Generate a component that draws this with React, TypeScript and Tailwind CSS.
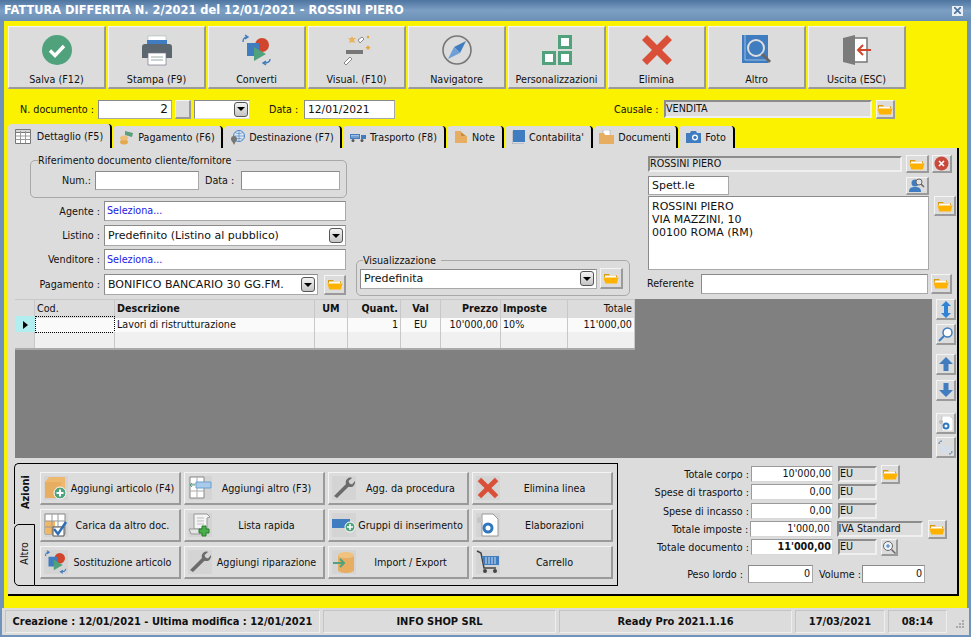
import type { ReactNode } from "react";

const bevel = "border border-t-[#f4f4f4] border-l-[#f4f4f4] border-r-[#9a9a9a] border-b-[#9a9a9a] border-r-2 border-b-2 bg-[#dcdcdc]";
const sunken = "border border-[#a8a8a8] border-t-[#8a8a8a] border-l-[#8a8a8a] bg-white";
const readonly = "border-2 border-t-[#8c8c8c] border-l-[#8c8c8c] border-r-[#efefef] border-b-[#efefef] bg-[#dcdcdc]";

function Folder({ size = 16 }: { size?: number }) {
  return (
    <svg width={size} height={size} viewBox="0 0 16 16">
      <path d="M1 4h5l1 1.500h7V7H1z" fill="#d99a10" />
      <path d="M2 5.500h11V8H2z" fill="#fff" />
      <path d="M0.500 7.500h15L13.800 13.500H2.200z" fill="#ffb300" />
    </svg>
  );
}

function FolderButton({ className }: { className: string }) {
  return (
    <button className={`${bevel} flex items-center justify-center shrink-0 ${className}`}>
      <Folder />
    </button>
  );
}

function ArrowBox() {
  return (
    <span className="w-[14px] h-[15px] shrink-0 rounded-[3px] border border-[#555] bg-gradient-to-b from-[#f4f4f4] to-[#c4c4c4] flex items-center justify-center">
      <span className="w-0 h-0 border-x-[4px] border-x-transparent border-t-[4px] border-t-black" />
    </span>
  );
}

function Select({ text, className }: { text: string; className: string }) {
  return (
    <div className={`${sunken} flex items-center pl-[3px] pr-[2px] shrink-0 ${className}`}>
      <span className="flex-1 font-stretch-normal text-[11px] whitespace-nowrap overflow-hidden">{text}</span>
      <ArrowBox />
    </div>
  );
}

function SalvaIcon() {
  return (
    <svg width="32" height="32" viewBox="0 0 32 32">
      <circle cx="16" cy="16" r="15" fill="#4fa27b" />
      <path d="M9 16.500l5 5 9-9.500" fill="none" stroke="#fff" strokeWidth="3.400" />
    </svg>
  );
}

function StampaIcon() {
  return (
    <svg width="32" height="32" viewBox="0 0 32 32">
      <path d="M7 2h18v8H7z" fill="#fff" stroke="#9aa" strokeWidth="0.500" />
      <path d="M6 6h20v7H6z" fill="#3f7dc0" />
      <path d="M1 13c0-2 1-3 3-3h24c2 0 3 1 3 3v11H1z" fill="#5b666e" />
      <path d="M7 19h18v12H7z" fill="#fff" stroke="#778" strokeWidth="0.700" />
      <path d="M10 23h12M10 26h12" stroke="#9aa" strokeWidth="1" />
    </svg>
  );
}

function ConvertiIcon({ size = 32 }: { size?: number }) {
  return (
    <svg width={size} height={size} viewBox="0 0 32 32">
      <circle cx="21" cy="11" r="7" fill="#d0452c" />
      <path d="M6 9h12v13H6z" fill="#3f7dc0" />
      <path d="M13 13l12 7-12 7z" fill="#4fa27b" />
      <path d="M2 8c0-3 1-5 5-5M4 1l3 2-3 2" fill="none" stroke="#3f7dc0" strokeWidth="1.400" />
      <path d="M29 25c0 3-2 4-6 4M25 27l-3 2 3 2" fill="none" stroke="#3f7dc0" strokeWidth="1.400" />
    </svg>
  );
}

function VisualIcon() {
  return (
    <svg width="32" height="32" viewBox="0 0 32 32">
      <path d="M5 16h17v4H5z" fill="#777" />
      <path d="M17 6l4-3 2 2-4 4z" fill="#fff" stroke="#888" />
      <path d="M3 29l6-6 2 2-6 6z" fill="#fff" stroke="#888" />
      <path d="M11 2l1 2 3 0-2 2 1 3-3-1-3 1 1-3-2-2 3 0z" fill="#e9b35c" />
      <path d="M27 11l.8 1.700 1.700.3-1.300 1.200.3 1.800-1.500-.9-1.500.9.300-1.800-1.300-1.200 1.700-.3z" fill="#e9a030" />
      <circle cx="27" cy="3" r="1.200" fill="#e9a030" />
    </svg>
  );
}

function NavIcon() {
  return (
    <svg width="32" height="32" viewBox="0 0 32 32">
      <circle cx="16" cy="16" r="14" fill="none" stroke="#777" strokeWidth="1.600" />
      <path d="M25 7l-6 12-6-6z" fill="#3f7dc0" />
      <path d="M7 25l6-12 6 6z" fill="#6f9fd8" />
    </svg>
  );
}

function PersonalIcon() {
  return (
    <svg width="32" height="32" viewBox="0 0 32 32">
      <path d="M18.500 2.500h11v11h-11zM2.500 18.500h11v11h-11zM18.500 18.500h11v11h-11z" fill="#fff" stroke="#4fa27b" strokeWidth="3" />
    </svg>
  );
}

function CrossIcon({ size = 32 }: { size?: number }) {
  return (
    <svg width={size} height={size} viewBox="0 0 32 32">
      <path d="M6 1l10 10L26 1l5 5-10 10 10 10-5 5-10-10L6 31l-5-5 10-10L1 6z" fill="#d94f38" />
    </svg>
  );
}

function AltroIcon() {
  return (
    <svg width="32" height="32" viewBox="0 0 32 32">
      <path d="M1 1h26v28H1z" fill="#3f7dc0" />
      <path d="M4 1v25h23" fill="none" stroke="#9cc0e6" strokeWidth="1" />
      <circle cx="15" cy="14" r="8" fill="#3f7dc0" stroke="#ddd" strokeWidth="2" />
      <path d="M21 20l8 8" stroke="#666" strokeWidth="3" />
    </svg>
  );
}

function UscitaIcon() {
  return (
    <svg width="32" height="32" viewBox="0 0 32 32">
      <path d="M12 4h14v24H12z" fill="#fff" stroke="#777" strokeWidth="1.500" />
      <path d="M2 4l12-3v30L2 28z" fill="#7b7b7b" />
      <path d="M30 16H17M22 11l-5 5 5 5" fill="none" stroke="#d0452c" strokeWidth="2" />
    </svg>
  );
}

function Wrench() {
  return (
    <svg width="24" height="24" viewBox="0 0 24 24">
      <rect width="24" height="24" fill="#d4d4d4" />
      <path d="M2 20L14 8c-1-3 1-6 4-6.500 1 0 1.500 0 2 .5l-3.500 3 1 2.500 2.500 1L23 5c.5 2-1 5.500-3.500 6-1.500.3-2 0-3-.3L5 22z" fill="#6b6b6b" />
    </svg>
  );
}

function GridIcon() {
  return (
    <svg width="18" height="15" viewBox="0 0 18 15">
      <path d="M.5 2.500h15v12H.5z" fill="#fff" stroke="#777" />
      <path d="M.5 .5h15v3H.5z" fill="#d8d8d8" stroke="#777" />
      <path d="M.5 7h15M.5 10.500h15M5.500 2v12M10.500 2v12" stroke="#999" />
    </svg>
  );
}

function TabIcon({ kind }: { kind: string }) {
  if (kind === "grid") return <GridIcon />;
  if (kind === "coin")
    return (
      <svg width="15" height="15" viewBox="0 0 15 15">
        <ellipse cx="5" cy="12" rx="4" ry="2.500" fill="#e3a94f" />
        <ellipse cx="5" cy="8" rx="4" ry="2.500" fill="#edc077" />
        <path d="M6 1l8 2-1 4-7-2z" fill="#5d9e7c" />
      </svg>
    );
  if (kind === "globe")
    return (
      <svg width="15" height="15" viewBox="0 0 15 15">
        <circle cx="9" cy="6" r="5.500" fill="#dfe8f2" stroke="#4f86c6" />
        <path d="M3.500 6h11M9 .5v11M5 2.500c3 1.500 5 1.500 8 0M5 9.500c3-1.500 5-1.500 8 0" stroke="#4f86c6" strokeWidth="0.700" fill="none" />
        <circle cx="4" cy="9" r="3" fill="#777" />
        <path d="M2 11l2 4 2-4z" fill="#777" />
      </svg>
    );
  if (kind === "truck")
    return (
      <svg width="16" height="12" viewBox="0 0 16 12">
        <path d="M0 3h10v5H0zM11 4h5v4h-5z" fill="#3f7dc0" />
        <path d="M1 4.500h8M1 6h8" stroke="#cfe0f2" strokeWidth="0.700" />
        <circle cx="3" cy="9.500" r="1.500" fill="#555" />
        <circle cx="12" cy="9.500" r="1.500" fill="#555" />
      </svg>
    );
  if (kind === "note")
    return (
      <svg width="14" height="14" viewBox="0 0 14 14">
        <path d="M1 1h6v5h6v7H1z" fill="#e7ae62" />
        <path d="M7 2l5 4H7z" fill="#c88a3c" />
      </svg>
    );
  if (kind === "book")
    return (
      <svg width="13" height="14" viewBox="0 0 13 14">
        <path d="M1 0h12v12H1z" fill="#3f7dc0" />
        <path d="M0 1v13h12" fill="none" stroke="#9ab" strokeWidth="1" />
      </svg>
    );
  if (kind === "docs")
    return (
      <svg width="15" height="14" viewBox="0 0 15 14">
        <path d="M4 0h7v6H4z" fill="#fff" stroke="#999" strokeWidth="0.500" />
        <path d="M0 3h5l1 2h9v9H0z" fill="#e7ae62" />
      </svg>
    );
  return (
    <svg width="15" height="12" viewBox="0 0 15 12">
      <path d="M0 2h4l1-2h5l1 2h4v10H0z" fill="#3f7dc0" />
      <circle cx="9" cy="6.500" r="3" fill="#fff" />
      <circle cx="9" cy="6.500" r="1.700" fill="#3f7dc0" />
    </svg>
  );
}

function Tab({ kind, label, className }: { kind: string; label: string; className: string }) {
  return (
    <div className={`shrink-0 flex items-center justify-center gap-[4px] bg-[#dcdcdc] border-r-2 border-r-black rounded-t-[4px] ${className}`}>
      <TabIcon kind={kind} />
      <span>{label}</span>
    </div>
  );
}

const tools: { label: string; icon: ReactNode }[] = [
  { label: "Salva (F12)", icon: <SalvaIcon /> },
  { label: "Stampa (F9)", icon: <StampaIcon /> },
  { label: "Converti", icon: <ConvertiIcon /> },
  { label: "Visual. (F10)", icon: <VisualIcon /> },
  { label: "Navigatore", icon: <NavIcon /> },
  { label: "Personalizzazioni", icon: <PersonalIcon /> },
  { label: "Elimina", icon: <CrossIcon /> },
  { label: "Altro", icon: <AltroIcon /> },
  { label: "Uscita (ESC)", icon: <UscitaIcon /> },
];

function ActBox({ children }: { children: ReactNode }) {
  return <span className="w-[24px] h-[24px] shrink-0 bg-[#d4d4d4] flex items-center justify-center">{children}</span>;
}

const actions: { label: string; icon: ReactNode }[] = [
  {
    label: "Aggiungi articolo (F4)",
    icon: (
      <ActBox>
        <svg width="24" height="24" viewBox="0 0 24 24">
          <path d="M1 6l4-5h16v15H1z" fill="#eeb96e" />
          <path d="M1 6h16v16H1z" fill="#e7ae62" />
          <circle cx="16" cy="17" r="6" fill="#4fa27b" stroke="#fff" />
          <path d="M16 13.500v7M12.500 17h7" stroke="#fff" strokeWidth="2" />
        </svg>
      </ActBox>
    ),
  },
  {
    label: "Aggiungi altro (F3)",
    icon: (
      <ActBox>
        <svg width="24" height="24" viewBox="0 0 24 24">
          <path d="M2 1h14v21H2z" fill="#fff" stroke="#888" />
          <path d="M2 8h14M2 15h14M9 1v21" stroke="#aaa" />
          <path d="M8 6h15v6H8z" fill="#a9cbea" stroke="#6c9fd0" />
          <path d="M2 9h5M2 9l2-2M2 9l2 2" stroke="#4fa27b" />
        </svg>
      </ActBox>
    ),
  },
  { label: "Agg. da procedura", icon: <Wrench /> },
  { label: "Elimina linea", icon: <ActBox><CrossIcon size={22} /></ActBox> },
  {
    label: "Carica da altro doc.",
    icon: (
      <ActBox>
        <svg width="24" height="24" viewBox="0 0 24 24">
          <path d="M1 1h20v20H1z" fill="#fff" stroke="#888" />
          <path d="M1 8h10v13H1z" fill="#f0b765" />
          <path d="M1 8h20M1 14h20M8 1v20M14 1v20" stroke="#999" />
          <path d="M9 14h11v9H9z" fill="#fff" stroke="#555" />
          <path d="M10 16l4 5 8-12" fill="none" stroke="#2f6db5" strokeWidth="2.500" />
        </svg>
      </ActBox>
    ),
  },
  {
    label: "Lista rapida",
    icon: (
      <ActBox>
        <svg width="24" height="24" viewBox="0 0 24 24">
          <path d="M6 1h13l3 3-3 1v11H6z" fill="#f4f4f4" stroke="#999" />
          <path d="M1 16h13v5H3z" fill="#e4e4e4" stroke="#999" />
          <path d="M9 5h7M9 8h7M9 11h7" stroke="#bbb" />
          <path d="M14 13h4v3h3v4h-3v3h-4v-3h-3v-4h3z" fill="#47b04b" stroke="#2a7a30" />
        </svg>
      </ActBox>
    ),
  },
  {
    label: "Gruppi di inserimento",
    icon: (
      <ActBox>
        <svg width="24" height="24" viewBox="0 0 24 24">
          <path d="M0 6h18v9H0z" fill="#3f7dc0" />
          <circle cx="18" cy="14" r="5" fill="#4fa27b" stroke="#fff" />
          <path d="M18 11v6M15 14h6" stroke="#fff" strokeWidth="1.500" />
        </svg>
      </ActBox>
    ),
  },
  {
    label: "Elaborazioni",
    icon: (
      <ActBox>
        <svg width="24" height="24" viewBox="0 0 24 24">
          <path d="M6 1h11l5 5v17H6z" fill="#fff" stroke="#999" />
          <circle cx="4" cy="7" r="3" fill="#c4c4c4" />
          <circle cx="12" cy="15" r="4" fill="none" stroke="#2f78c0" strokeWidth="3" />
        </svg>
      </ActBox>
    ),
  },
  { label: "Sostituzione articolo", icon: <ActBox><ConvertiIcon size={24} /></ActBox> },
  { label: "Aggiungi riparazione", icon: <Wrench /> },
  {
    label: "Import / Export",
    icon: (
      <ActBox>
        <svg width="24" height="24" viewBox="0 0 24 24">
          <ellipse cx="14" cy="5" rx="8" ry="3" fill="#f1c27d" />
          <path d="M6 5v15c0 4 16 4 16 0V5c0 4-16 4-16 0z" fill="#e7ae62" />
          <path d="M1 13h11M8 9l4 4-4 4" fill="none" stroke="#4fa27b" strokeWidth="2" />
        </svg>
      </ActBox>
    ),
  },
  {
    label: "Carrello",
    icon: (
      <ActBox>
        <svg width="24" height="24" viewBox="0 0 24 24">
          <path d="M1 1l4 2 3 15h12" fill="none" stroke="#444" strokeWidth="1.500" />
          <path d="M6 6h17v9H8z" fill="#3f7dc0" />
          <path d="M10 7v7M13 7v7M16 7v7M19 7v7" stroke="#cfe0f2" />
          <circle cx="9" cy="21" r="2" fill="#444" />
          <circle cx="19" cy="21" r="2" fill="#444" />
        </svg>
      </ActBox>
    ),
  },
];

function SideButton({ children, className = "" }: { children: ReactNode; className?: string }) {
  return <button className={`${bevel} w-[20px] h-[21px] flex items-center justify-center ${className}`}>{children}</button>;
}

function TotalRow({ label, value, bold, className, children }: { label: string; value: string; bold?: boolean; className?: string; children?: ReactNode }) {
  return (
    <div className={`flex items-center h-[18px] ${className ?? ""}`}>
      <span className="w-[119px] text-right whitespace-nowrap">{label}</span>
      <span className={`ml-[2px] w-[82px] h-[16px] border border-[#9a9a9a] border-r-[#d8d8d8] border-b-[#d8d8d8] bg-white text-right pr-[1px] leading-[14px] ${bold ? "font-bold" : ""}`}>{value}</span>
      {children}
    </div>
  );
}

const cols = "grid grid-cols-[20px_80px_200px_33px_53px_40px_60px_67px_67px]";
const headCell = "border-r border-[#c8c8c8] bg-[#dcdcdc] px-[2px] whitespace-nowrap";
const cell = "border-r border-[#c8c8c8] px-[2px] whitespace-nowrap";
const statusCell = "h-[23px] border border-[#c4c4c4] border-b-[#eee] border-r-[#eee] text-center";

export default function App() {
  return (
    <div className="w-[971px] h-[637px] overflow-hidden flex flex-col bg-[#6f93ba] text-[10.700px] leading-[13px] text-[#111] font-['DejaVu_Sans',sans-serif] font-stretch-condensed">
      {/* Title bar */}
      <div className="h-[21px] shrink-0 flex items-center justify-between pl-[4px] pr-[8px] bg-gradient-to-b from-[#4d75a0] via-[#7d9fc4] to-[#6b8fb6] text-white font-bold font-stretch-normal text-[11.400px] whitespace-nowrap">
        <span>FATTURA DIFFERITA N. 2/2021 del 12/01/2021 - ROSSINI PIERO</span>
        <span className="w-[11px] h-[10px] bg-[#e8eef5] flex items-center justify-center">
          <svg width="7" height="7" viewBox="0 0 7 7"><path d="M0 0l7 7M7 0L0 7" stroke="#4d75a0" strokeWidth="1.800" /></svg>
        </span>
      </div>

      {/* Yellow window body */}
      <div className="h-[587px] shrink-0 mx-[4px] bg-[#fbf200] pl-[4px] pt-[5px] flex flex-col">
        {/* Toolbar */}
        <div className="flex gap-[2px] h-[63px] shrink-0">
          {tools.map((t) => (
            <button key={t.label} className={`${bevel} w-[98px] h-[63px] flex flex-col items-center pt-[7px]`}>
              <span className="h-[32px]">{t.icon}</span>
              <span className="mt-[7px] whitespace-nowrap">{t.label}</span>
            </button>
          ))}
        </div>

        {/* Document row */}
        <div className="flex items-center h-[20px] mt-[10px] shrink-0">
          <span className="ml-[12px] w-[74px] whitespace-nowrap">N. documento :</span>
          <span className={`${sunken} ml-[4px] w-[74px] h-[19px] text-right pr-[3px] leading-[17px] text-[12px] font-stretch-normal`}>2</span>
          <button className={`${bevel} ml-[3px] w-[16px] h-[19px]`} />
          <div className={`${sunken} ml-[3px] w-[56px] h-[19px] flex items-center justify-end pr-[1px] border-[#ddd]`}>
            <ArrowBox />
          </div>
          <span className="ml-[19px] w-[31px] whitespace-nowrap">Data :</span>
          <span className={`${sunken} ml-[4px] w-[91px] h-[19px] pl-[3px] leading-[17px] font-stretch-normal`}>12/01/2021</span>
          <span className="ml-[219px] w-[46px] whitespace-nowrap">Causale :</span>
          <span className={`${readonly} ml-[4px] w-[208px] h-[18px] leading-[14px]`}>VENDITA</span>
          <FolderButton className="ml-[4px] w-[19px] h-[19px]" />
        </div>

        {/* Tabs */}
        <div className="flex items-end h-[24px] mt-[5px] gap-[1px] shrink-0">
          <Tab kind="grid" label="Dettaglio (F5)" className="w-[104px] h-[24px]" />
          <Tab kind="coin" label="Pagamento (F6)" className="w-[110px] h-[22px]" />
          <Tab kind="globe" label="Destinazione (F7)" className="w-[118px] h-[22px]" />
          <Tab kind="truck" label="Trasporto (F8)" className="w-[103px] h-[22px]" />
          <Tab kind="note" label="Note" className="w-[57px] h-[22px]" />
          <Tab kind="book" label="Contabilita'" className="w-[88px] h-[22px]" />
          <Tab kind="docs" label="Documenti" className="w-[84px] h-[22px]" />
          <Tab kind="photo" label="Foto" className="w-[56px] h-[22px]" />
        </div>

        {/* Main panel */}
        <div className="w-[951px] h-[448px] shrink-0 bg-[#dcdcdc] border-r-2 border-b-2 border-black flex flex-col">
          <div className="flex h-[151px] shrink-0">
            {/* Left column */}
            <div className="w-[338px] shrink-0 pt-[6px]">
              <fieldset className="ml-[22px] w-[317px] h-[44px] border border-[#a8a8a8] rounded-[5px] pl-[7px]">
                <legend className="pr-[5px] leading-[13px]">Riferimento documento cliente/fornitore</legend>
                <div className="flex items-center h-[20px] mt-[3px] -ml-[7px]">
                  <span className="ml-[31px] w-[30px] whitespace-nowrap">Num.:</span>
                  <span className={`${sunken} ml-[3px] w-[104px] h-[19px] border-[#777]`} />
                  <span className="ml-[6px] w-[30px] whitespace-nowrap">Data :</span>
                  <span className={`${sunken} ml-[6px] w-[99px] h-[19px] border-[#777]`} />
                </div>
              </fieldset>
              <div className="flex items-center h-[20px] mt-[3px]">
                <span className="w-[92px] text-right">Agente :</span>
                <span className={`${sunken} ml-[4px] w-[242px] h-[20px] pl-[2px] leading-[18px] text-[#1a1ae6]`}>Seleziona...</span>
              </div>
              <div className="flex items-center h-[21px] mt-[4px]">
                <span className="w-[92px] text-right">Listino :</span>
                <Select text="Predefinito (Listino al pubblico)" className="ml-[4px] w-[242px] h-[21px]" />
              </div>
              <div className="flex items-center h-[21px] mt-[3px]">
                <span className="w-[92px] text-right">Venditore :</span>
                <span className={`${sunken} ml-[4px] w-[242px] h-[21px] pl-[2px] leading-[19px] text-[#1a1ae6]`}>Seleziona...</span>
              </div>
              <div className="flex items-center h-[21px] mt-[4px]">
                <span className="w-[92px] text-right">Pagamento :</span>
                <Select text="BONIFICO BANCARIO 30 GG.FM." className="ml-[4px] w-[214px] h-[21px]" />
                <FolderButton className="ml-[6px] w-[22px] h-[20px]" />
              </div>
            </div>

            {/* Middle column */}
            <div className="w-[294px] shrink-0 pl-[10px] pt-[106px]">
              <fieldset className="w-[274px] h-[42px] border border-[#a8a8a8] rounded-[5px] pl-[3px]">
                <legend className="ml-[3px] pr-[5px] leading-[13px]">Visualizzazione</legend>
                <div className="flex items-center gap-[3px] mt-[1px]">
                  <Select text="Predefinita" className="w-[237px] h-[20px]" />
                  <FolderButton className="w-[23px] h-[21px]" />
                </div>
              </fieldset>
            </div>

            {/* Customer column */}
            <div className="w-[319px] shrink-0 pt-[7px] pl-[8px]">
              <div className="flex items-center h-[18px]">
                <span className={`${readonly} w-[254px] h-[16px] leading-[12px]`}>ROSSINI PIERO</span>
                <FolderButton className="ml-[4px] w-[23px] h-[18px]" />
                <button className={`${bevel} ml-[3px] w-[20px] h-[18px] flex items-center justify-center`}>
                  <svg width="15" height="15" viewBox="0 0 15 15">
                    <circle cx="7.500" cy="7.500" r="7" fill="#c94a3c" />
                    <path d="M5 5l5 5M10 5l-5 5" stroke="#fff" strokeWidth="1.600" />
                  </svg>
                </button>
              </div>
              <div className="flex items-center h-[19px] mt-[3px]">
                <span className={`${sunken} w-[81px] h-[19px] pl-[3px] leading-[17px] text-[11px] font-stretch-normal`}>Spett.le</span>
                <button className={`${bevel} ml-[177px] w-[23px] h-[18px] flex items-center justify-center`}>
                  <svg width="16" height="14" viewBox="0 0 16 14">
                    <circle cx="6" cy="5" r="3.500" fill="#3f7dc0" />
                    <path d="M0 14c0-4 2-5 6-5s6 1 6 5z" fill="#3f7dc0" />
                    <circle cx="10" cy="4" r="3" fill="#e4e4e4" stroke="#666" />
                    <path d="M12 6l3 3" stroke="#666" strokeWidth="1.500" />
                  </svg>
                </button>
              </div>
              <div className="flex mt-[1px]">
                <div className={`${sunken} w-[281px] h-[74px] pl-[3px] pt-[3px] bg-[#fafafa] border-[#999] text-[11px] font-stretch-normal`}>
                  ROSSINI PIERO<br />VIA MAZZINI, 10<br />00100 ROMA (RM)
                </div>
                <FolderButton className="ml-[5px] w-[22px] h-[20px]" />
              </div>
              <div className="flex items-center h-[21px] mt-[3px]">
                <span className="w-[54px] -ml-[1px] whitespace-nowrap">Referente</span>
                <span className={`${sunken} w-[227px] h-[20px] border-[#a0a0a0]`} />
                <FolderButton className="ml-[3px] w-[21px] h-[20px]" />
              </div>
            </div>
          </div>

          {/* Lines grid */}
          <div className="flex h-[160px] shrink-0 ml-[7px]">
            <div className="w-[917px] h-[159px] bg-[#808080]">
              <div className="w-[620px] border-b-2 border-[#aaa] bg-white">
                <div className={`${cols} h-[17px] leading-[18px] border-t border-[#c8c8c8]`}>
                  <span className={headCell} />
                  <span className={headCell}>Cod.</span>
                  <span className={`${headCell} font-bold`}>Descrizione</span>
                  <span className={`${headCell} font-bold text-center`}>UM</span>
                  <span className={`${headCell} font-bold text-right`}>Quant.</span>
                  <span className={`${headCell} font-bold text-center`}>Val</span>
                  <span className={`${headCell} font-bold text-right`}>Prezzo</span>
                  <span className={`${headCell} font-bold`}>Imposte</span>
                  <span className={`${headCell} text-right`}>Totale</span>
                </div>
                <div className={`${cols} h-[16px] leading-[17px] bg-[#fafafa]`}>
                  <span className="bg-[#b2eef0] flex items-center justify-center">
                    <span className="w-0 h-0 border-y-[4px] border-y-transparent border-l-[5px] border-l-black" />
                  </span>
                  <span className="border border-dotted border-black" />
                  <span className={cell}>Lavori di ristrutturazione</span>
                  <span className={cell} />
                  <span className={`${cell} text-right`}>1</span>
                  <span className={`${cell} text-center`}>EU</span>
                  <span className={`${cell} text-right`}>10'000,00</span>
                  <span className={cell}>10%</span>
                  <span className={`${cell} text-right`}>11'000,00</span>
                </div>
                <div className={`${cols} h-[16px] bg-[#f0f0f0]`}>
                  <span className="bg-[#dcdcdc] border-r border-[#c8c8c8]" />
                  <span className={cell} />
                  <span className={cell} />
                  <span className={cell} />
                  <span className={cell} />
                  <span className={cell} />
                  <span className={cell} />
                  <span className={cell} />
                  <span className={cell} />
                </div>
              </div>
            </div>
            <div className="ml-[4px] flex flex-col">
              <SideButton>
                <svg width="10" height="17" viewBox="0 0 10 17"><path d="M5 0l5 5H7v7h3l-5 5-5-5h3V5H0z" fill="#2f84d6" /></svg>
              </SideButton>
              <SideButton className="mt-[4px]">
                <svg width="15" height="15" viewBox="0 0 15 15"><circle cx="9.500" cy="5.500" r="4.500" fill="#fff" stroke="#3f7dc0" strokeWidth="1.500" /><path d="M6 9l-5 5" stroke="#3f7dc0" strokeWidth="2" /></svg>
              </SideButton>
              <SideButton className="mt-[9px]">
                <svg width="14" height="14" viewBox="0 0 14 14"><path d="M7 0l7 7H9.500v7h-5V7H0z" fill="#3f7dc0" /></svg>
              </SideButton>
              <SideButton className="mt-[5px]">
                <svg width="14" height="14" viewBox="0 0 14 14"><path d="M7 14l7-7H9.500V0h-5v7H0z" fill="#3f7dc0" /></svg>
              </SideButton>
              <SideButton className="mt-[12px]">
                <svg width="14" height="15" viewBox="0 0 14 15"><path d="M3 0h8l3 3v12H3z" fill="#fff" stroke="#aaa" strokeWidth="0.500" /><circle cx="2" cy="6" r="2" fill="#bbb" /><circle cx="7" cy="10" r="2.500" fill="none" stroke="#2f78c0" strokeWidth="2" /></svg>
              </SideButton>
              <SideButton className="mt-[3px]">
                <svg width="15" height="15" viewBox="0 0 15 15"><path d="M4 6h3v6H4zM9 6h3v6H9z" fill="#cfe0f2" /><path d="M1 4c0-2 1-3 3-3M14 11c0 2-1 3-3 3" fill="none" stroke="#3f7dc0" /></svg>
              </SideButton>
            </div>
          </div>

          {/* Bottom section */}
          <div className="flex h-[135px] shrink-0 ml-[6px]">
            <div className="w-[604px] h-[123px] mt-[4px] shrink-0 flex">
              <div className="w-[21px] shrink-0 flex flex-col font-bold">
                <div className="h-[61px] border-l border-t border-black rounded-tl-[5px] flex items-start pt-[11px] justify-center">
                  <span className="[writing-mode:vertical-rl] rotate-180 text-[11px]">Azioni</span>
                </div>
                <div className="h-[62px] border border-black rounded-l-[5px] flex items-start pt-[17px] justify-center font-normal">
                  <span className="[writing-mode:vertical-rl] rotate-180">Altro</span>
                </div>
              </div>
              <div className="flex-1 border-t border-r border-b border-black pl-[5px] pt-[8px]">
                <div className="grid grid-cols-[141px_141px_141px_141px] grid-rows-[33px_33px_33px] gap-x-[3px] gap-y-[4px]">
                  {actions.map((a) => (
                    <button key={a.label} className={`${bevel} flex items-center pl-[3px] pr-[2px]`}>
                      {a.icon}
                      <span className="flex-1 text-center whitespace-nowrap">{a.label}</span>
                    </button>
                  ))}
                </div>
              </div>
            </div>

            {/* Totals */}
            <div className="ml-[9px] w-[320px] shrink-0 pt-[6px] pl-[3px]">
              <TotalRow label="Totale corpo :" value="10'000,00">
                <span className={`${readonly} ml-[5px] w-[39px] h-[16px] leading-[12px]`}>EU</span>
                <FolderButton className="ml-[4px] w-[19px] h-[19px]" />
              </TotalRow>
              <TotalRow label="Spese di trasporto :" value="0,00">
                <span className={`${readonly} ml-[5px] w-[39px] h-[16px] leading-[12px]`}>EU</span>
              </TotalRow>
              <TotalRow label="Spese di incasso :" value="0,00" className="mt-[1px]">
                <span className={`${readonly} ml-[5px] w-[39px] h-[16px] leading-[12px]`}>EU</span>
              </TotalRow>
              <TotalRow label="Totale imposte :" value="1'000,00">
                <span className={`${readonly} ml-[5px] w-[87px] h-[16px] leading-[12px]`}>IVA Standard</span>
                <FolderButton className="ml-[5px] w-[19px] h-[19px]" />
              </TotalRow>
              <TotalRow label="Totale documento :" value="11'000,00" bold>
                <span className={`${readonly} ml-[5px] w-[39px] h-[16px] leading-[12px]`}>EU</span>
                <button className={`${bevel} ml-[4px] w-[17px] h-[17px] flex items-center justify-center`}>
                  <svg width="14" height="14" viewBox="0 0 14 14"><circle cx="6" cy="6" r="4.500" fill="#eef3f8" stroke="#666" /><path d="M9.500 9.500l4 4" stroke="#666" strokeWidth="1.500" /><path d="M6 4v4M4 6h4" stroke="#3f7dc0" /></svg>
                </button>
              </TotalRow>
              <div className="flex items-center h-[18px] mt-[9px]">
                <span className="w-[113px] text-right whitespace-nowrap">Peso lordo :</span>
                <span className={`${sunken} ml-[5px] w-[65px] h-[18px] text-right pr-[2px] leading-[16px] bg-[#fafafa]`}>0</span>
                <span className="ml-[6px] w-[43px] whitespace-nowrap">Volume :</span>
                <span className={`${sunken} w-[63px] h-[18px] text-right pr-[2px] leading-[16px] bg-[#fafafa]`}>0</span>
              </div>
            </div>
          </div>
        </div>
      </div>

      {/* Status bar */}
      <div className="h-[27px] shrink-0 mx-[2px] bg-[#dcdcdc] flex items-center pl-[3px] gap-[3px] font-bold text-[11px] leading-[21px] whitespace-nowrap">
        <span className={`${statusCell} w-[315px]`}>Creazione : 12/01/2021 - Ultima modifica : 12/01/2021</span>
        <span className={`${statusCell} w-[233px]`}>INFO SHOP SRL</span>
        <span className={`${statusCell} w-[233px]`}>Ready Pro 2021.1.16</span>
        <span className={`${statusCell} w-[90px]`}>17/03/2021</span>
        <span className={`${statusCell} w-[59px]`}>08:14</span>
        <svg width="10" height="10" viewBox="0 0 10 10" className="ml-[5px] mt-[4px]"><path d="M7 1h2v2H7zM4 4h2v2H4zM7 4h2v2H7zM1 7h2v2H1zM4 7h2v2H4zM7 7h2v2H7z" fill="#a9a9a9" /></svg>
      </div>
    </div>
  );
}
